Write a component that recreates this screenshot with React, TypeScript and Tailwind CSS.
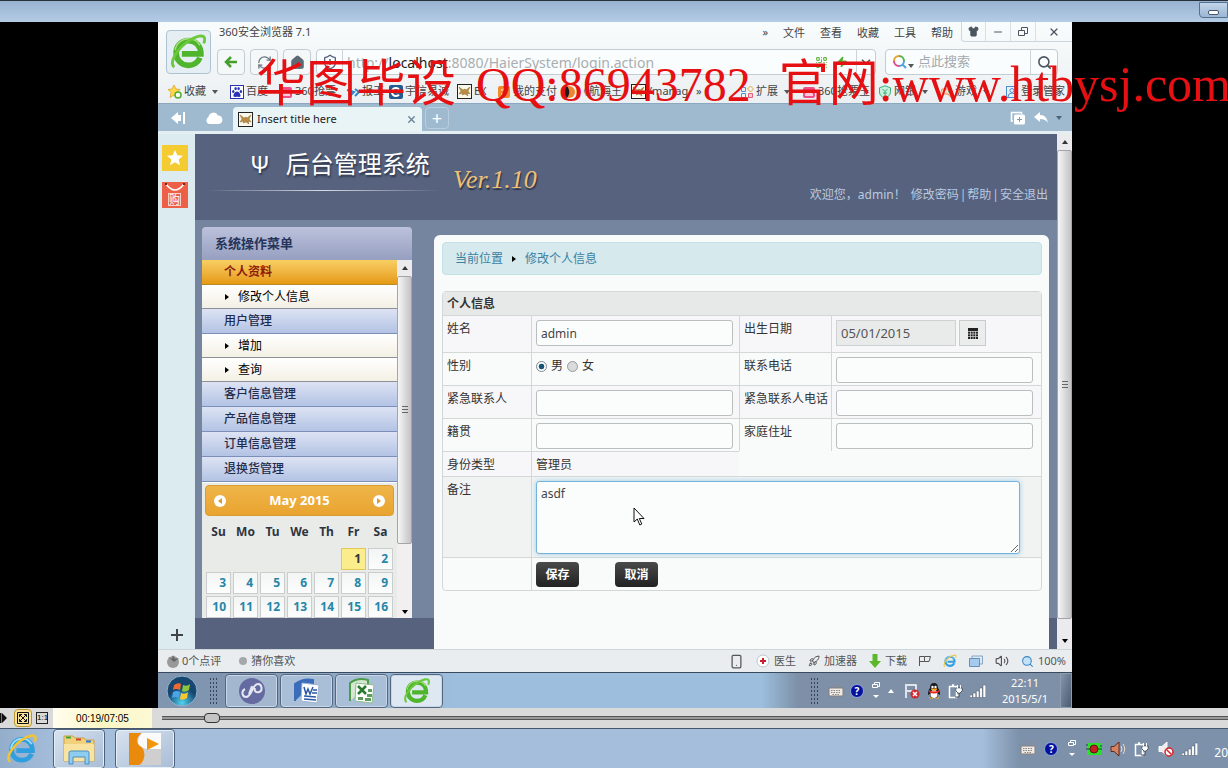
import React from 'react';
import { ChevronDown, Home, Minus, QrCode, RefreshCw, Rocket, Search, Shield, Shirt, Smartphone, Volume2, X, Zap } from 'lucide-react';

interface IconProps {
  className?: string;
}

const BrowserLogo: React.FC<IconProps> = ({ className }) => (
  <svg className={className} viewBox="0 0 40 40" fill="none">
    <path d="M32 26c-2 5-7 8-12 8C12 34 7 28 7 21S12 8 20 8s13 6 13 14H13" stroke="#4fb52c" strokeWidth="6" />
    <path d="M6 18c1-7 7-12 14-12 6 0 10 3 12 7" stroke="#a6e07c" strokeWidth="1.500" />
    <path d="M5 36C-1 31 8 17 19 9 28 3 37 1 37 6c0 2 0 3-1 5" stroke="#6cc83c" strokeWidth="3" />
  </svg>
);

const IeLogo: React.FC<IconProps> = ({ className }) => (
  <svg className={className} viewBox="0 0 40 40" fill="none">
    <path d="M32 26c-2 5-7 8-12 8C12 34 7 28 7 21S12 8 20 8s13 6 13 14H13" stroke="#2f9fe0" strokeWidth="6" />
    <path d="M6 20c1-8 7-13 14-13 6 0 10 3 12 7" stroke="#9fe0fb" strokeWidth="2" />
    <path d="M5 36C-1 31 8 17 19 9 28 3 37 1 37 6c0 2 0 3-1 5" stroke="#f4c430" strokeWidth="3" />
  </svg>
);

const Keyboard: React.FC = () => (
  <svg className="h-4 w-4" viewBox="0 0 16 16">
    <path d="M8 4V2h4" stroke="#8c8c8c" fill="none" />
    <rect x="1" y="5" width="14" height="8" rx="1" fill="#eee9e4" stroke="#877f7b" />
    <path d="M3 7.500h10M3 9.500h10M4.500 11.500h7" stroke="#8c8683" strokeDasharray="1.500 1" />
  </svg>
);

const Help: React.FC = () => (
  <span className="flex h-3.5 w-3.5 items-center justify-center rounded-full border border-[#8ea6dd] bg-[#06109b] text-[10px] font-bold leading-none text-white">?</span>
);

const Restore: React.FC = () => (
  <svg className="h-5 w-3" viewBox="0 0 12 20" fill="none">
    <path d="M4.500 3.500v-2h5v4h-2M2.500 3.500h5v3h-5z" stroke="#fff" />
    <path d="M3 14h6l-3 3z" fill="#fff" />
  </svg>
);

const Plug: React.FC = () => (
  <svg className="h-4 w-4" viewBox="0 0 16 16" fill="none">
    <path d="M1.500 3.500h7v11h-7zM4 2h2" stroke="#fff" strokeWidth="1.500" />
    <path d="M8 5h6v3l-2 2h-2L8 8zM9.500 2v3M12.500 2v3M11 10v4H7" fill="#fff" stroke="#3a4656" />
    <path d="M8.500 5.500h5V8l-1.500 1.500h-2L8.500 8zM9 2h1v3H9zM12 2h1v3h-1z" fill="#fff" />
  </svg>
);

const Signal: React.FC = () => (
  <svg className="h-4 w-4" viewBox="0 0 16 16" fill="#fff" stroke="#4c5b6d" strokeWidth=".5">
    <path d="M0 12h2.500v2.500H0zM3 10h2.800v4.500H3zM6.300 8H9v6.500H6.300zM9.600 5h2.800v9.500H9.600zM13 2h2.800v12.500H13z" />
  </svg>
);

const Speaker: React.FC<{ muted?: boolean }> = ({ muted }) => (
  <svg className="h-4 w-4" viewBox="0 0 16 16" fill="none">
    <path d="M1 5.500h3L9 1v14l-5-4.500H1z" fill={muted ? '#eee' : '#d58362'} stroke={muted ? '#fff' : '#5c2a1c'} />
    {muted ? (
      <>
        <circle cx="11" cy="11" r="4" fill="#fff" stroke="#d3232a" strokeWidth="1.500" />
        <path d="M8.500 8.500l5 5" stroke="#d3232a" strokeWidth="1.500" />
      </>
    ) : (
      <path d="M11 5q2 3 0 6M13 3q3.500 5 0 10" stroke="#f3dccc" />
    )}
  </svg>
);

const Duke: React.FC = () => (
  <svg className="h-[15px] w-[15px] shrink-0" viewBox="0 0 15 15">
    <rect x=".5" y=".5" width="14" height="14" fill="#fbf8ec" stroke="#222" />
    <path d="M2 3l4 3 2-1 1 1 4-3-2 4 2 3-3-1 1 3-3-2-3 1 1-2-4 1 2-3z" fill="#b98d45" stroke="#8d6a2c" strokeWidth=".5" />
  </svg>
);

const TabPlus: React.FC = () => (
  <svg className="h-4 w-4" viewBox="0 0 16 16" fill="none">
    <path d="M3 11H1.500V2.500h10V4" stroke="#fff" strokeWidth="1.500" />
    <rect x="4" y="4.500" width="11" height="10" rx="1.500" fill="#fff" />
    <path d="M9.500 7v5M7 9.500h5" stroke="#7f9db8" />
  </svg>
);

const Caret: React.FC<IconProps> = ({ className }) => (
  <svg className={`h-1 w-1.5 ${className ?? ''}`} viewBox="0 0 6 4" fill="currentColor">
    <path d="M0 0h6L3 4z" />
  </svg>
);

const Grip: React.FC = () => (
  <div className="h-7 w-2 bg-[radial-gradient(#394556_40%,transparent_45%)] bg-[length:3px_4px]" />
);

const Dot: React.FC<{ kind: string }> = ({ kind }) => {
  const common = 'h-[14px] w-[14px] shrink-0';
  switch (kind) {
    case 'star':
      return (
        <svg className={common} viewBox="0 0 14 14">
          <path d="M6 0l2 4 4 .5-3 3 1 5-4-2.500-4 2.500 1-5-3-3L4 4z" fill="#ffd84d" stroke="#d79b19" strokeWidth=".7" />
          <circle cx="10" cy="10" r="3" fill="#fff" stroke="#4fae2c" strokeWidth="1.500" />
        </svg>
      );
    case 'baidu':
      return (
        <svg className={common} viewBox="0 0 14 14">
          <rect x=".5" y=".5" width="13" height="13" fill="#fff" stroke="#2932b5" />
          <g fill="#2932b5">
            <ellipse cx="3.300" cy="6.500" rx="1.200" ry="1.600" />
            <ellipse cx="5.600" cy="3.600" rx="1.200" ry="1.600" />
            <ellipse cx="8.600" cy="3.600" rx="1.200" ry="1.600" />
            <ellipse cx="10.900" cy="6.500" rx="1.200" ry="1.600" />
            <path d="M7 6.500c2 0 4 3 3.500 4.500S8 11.800 7 11.800 4 12.500 3.500 11 5 6.500 7 6.500z" />
          </g>
        </svg>
      );
    case 'pink':
      return (
        <svg className={common} viewBox="0 0 14 14">
          <rect x="1" y="2" width="12" height="11" rx="2" fill="#ee4f86" />
          <path d="M3 5h8v2l-1 1 1 1v2H3V9l1-1-1-1z" fill="#fbc9db" />
        </svg>
      );
    case 'job':
      return (
        <svg className={common} viewBox="0 0 14 14" fill="none" stroke="#2d86c9" strokeWidth="2">
          <path d="M4 1v12M1 5l7 2-4 4M9 4l4 3-4 4" />
        </svg>
      );
    case 'city':
      return (
        <svg className={common} viewBox="0 0 14 14">
          <rect width="14" height="14" rx="2" fill="#245b8e" />
          <path d="M10 4.500a4 4 0 1 0 0 5" fill="none" stroke="#fff" strokeWidth="2" />
          <circle cx="8" cy="7" r="1.500" fill="#e55" />
        </svg>
      );
    case 'pay':
      return (
        <svg className={common} viewBox="0 0 14 14">
          <rect x="1" y="1" width="12" height="12" rx="2" fill="#f28a2c" />
          <path d="M4 5h6M7 3v8M4 9q6 0 6-2" stroke="#fff" fill="none" />
        </svg>
      );
    case 'sail':
      return (
        <svg className={common} viewBox="0 0 14 14">
          <circle cx="7" cy="7" r="6" fill="#f08433" />
          <path d="M5 1a6 6 0 0 0 0 12c3-4 3-8 0-12z" fill="#1a1a1a" />
        </svg>
      );
    case 'apps':
      return (
        <svg className={common} viewBox="0 0 14 14" fill="none">
          <path d="M1.500 2.500h4v4h-4zM1.500 8.500h4v4h-4z" stroke="#4d94cf" />
          <path d="M10.500 1l3 3-3 3-3-3z" stroke="#eda13c" />
          <path d="M8.500 8.500h4v4h-4z" stroke="#e5627c" fill="#f9ccd4" />
        </svg>
      );
    case 'bank':
      return (
        <svg className={common} viewBox="0 0 14 14" fill="#c9f0dc" stroke="#37b27c">
          <path d="M7 .8l5.500 2v4c0 3-2 5-5.500 6.500C3.500 11.800 1.500 10 1.500 7V2.800z" />
          <path d="M4.500 4L7 6.500 9.500 4M7 6.500V11M5 8h4" />
        </svg>
      );
    case 'game':
      return (
        <svg className={common} viewBox="0 0 14 14">
          <path d="M3 4h8q3 8 1 8-1 0-3-3H5q-2 3-3 3-2 0 1-8z" fill="#fbe1c7" stroke="#ea8a54" />
          <circle cx="10" cy="6.500" r="1" fill="#4c9" />
        </svg>
      );
    case 'login':
      return (
        <svg className={common} viewBox="0 0 14 14" fill="none" stroke="#4d8ed0">
          <rect x="1.500" y="1.500" width="11" height="11" fill="#e4f1fb" />
          <circle cx="7" cy="5.500" r="2" />
          <path d="M3 12q0-4 4-4t4 4" />
        </svg>
      );
    default:
      return <Duke />;
  }
};

const bookmarks = [
  { label: '收藏', icon: 'star', width: 'w-[62px]', menu: true },
  { label: '百度', icon: 'baidu', width: 'w-[49px]' },
  { label: '360抢票', icon: 'pink', width: 'w-[67px]' },
  { label: '报工', icon: 'job', width: 'w-[43px]' },
  { label: '宇信易诚', icon: 'city', width: 'w-[68px]' },
  { label: 'EX', icon: 'duke', width: 'w-[40px]' },
  { label: '我的支付', icon: 'pay', width: 'w-[65px]' },
  { label: '《航海王', icon: 'sail', width: 'w-[69px]' },
  { label: '/manag', icon: 'duke', width: 'w-[65px]' },
  { label: '»', icon: '', width: 'w-[44px]' },
  { label: '扩展', icon: 'apps', width: 'w-[62px]', menu: true },
  { label: '360抢票王', icon: 'pink', width: 'w-[76px]' },
  { label: '网银', icon: 'bank', width: 'w-[61px]', menu: true },
  { label: '游戏', icon: 'game', width: 'w-[66px]', menu: true },
  { label: '登录管家', icon: 'login', width: 'w-[66px]' },
];

const menus = ['文件', '查看', '收藏', '工具', '帮助'];

const navItems = [
  { label: '个人资料', type: 'active' },
  { label: '修改个人信息', type: 'sub' },
  { label: '用户管理', type: 'group' },
  { label: '增加', type: 'sub' },
  { label: '查询', type: 'sub' },
  { label: '客户信息管理', type: 'group' },
  { label: '产品信息管理', type: 'group' },
  { label: '订单信息管理', type: 'group' },
  { label: '退换货管理', type: 'group' },
];

const navStyles: Record<string, string> = {
  active: 'h-[25px] pl-[22px] font-bold text-[#8c1f0a] border-[#b98a2c] bg-linear-to-b from-[#f8cf62] to-[#e59a0c]',
  sub: 'h-6 pl-[22px] text-black border-[#8f9198] bg-linear-to-b from-white to-[#f3f0e4]',
  group: 'h-[25px] pl-[22px] font-medium text-[#1f2c4d] border-[#7d8fb8] bg-linear-to-b from-[#dde3f3] to-[#b3c3e4]',
};

const weeks = [
  [0, 0, 0, 0, 0, 1, 2],
  [3, 4, 5, 6, 7, 8, 9],
  [10, 11, 12, 13, 14, 15, 16],
];

const navButton = 'flex h-[26px] w-7 shrink-0 items-center justify-center rounded-sm border border-[#c3ccd1] bg-[#f4f8f9]';
const field = 'block h-[26px] w-[197px] rounded-[3px] border border-[#b9bebf] bg-[#fbfdfd] px-1 text-[12px] text-[#444]';
const label = 'border-t border-[#d3d8d6] pl-1 pt-1 align-top leading-[18px]';
const cell = 'border-t border-l border-[#d3d8d6] pl-1 pt-1 align-top leading-[18px]';

const BrowserHeader: React.FC = () => (
  <header className="shrink-0 bg-linear-to-b from-[#f9fcfc] to-[#e6ebee]">
    <div className="flex h-[54px] pl-2">
      <button aria-label="360" className="mt-2 h-[44px] w-[45px] shrink-0 rounded-sm border border-[#aec3d2] bg-[#e4eef3] p-0.5">
        <BrowserLogo className="h-full w-full" />
      </button>
      <div className="flex min-w-0 flex-1 flex-col pl-1.5">
        <div className="flex h-[27px] items-start justify-between text-[11px] text-[#444]">
          <span className="pt-0.5 pl-0.5">360安全浏览器 7.1</span>
          <div className="flex">
            <nav className="flex gap-[15px] pt-0.5 pr-2">
              <span>»</span>
              {menus.map((m) => (
                <button key={m}>{m}</button>
              ))}
            </nav>
            <div className="flex h-5 rounded-bl border-b border-l border-[#ccd7dd] text-[#4b5560]">
              <button aria-label="皮肤" className="flex w-6 items-center justify-center border-r border-[#d8e0e4]"><Shirt size={11} fill="currentColor" /></button>
              <button aria-label="最小化" className="flex w-[25px] items-center justify-center border-r border-[#d8e0e4]"><Minus size={12} /></button>
              <button aria-label="还原" className="flex w-[25px] items-center justify-center border-r border-[#d8e0e4]">
                <svg className="h-2.5 w-2.5" viewBox="0 0 10 10" fill="none" stroke="currentColor"><path d="M3.500 3V.5h6v6H7M.5 3.500h6v5h-6z" /></svg>
              </button>
              <button aria-label="关闭" className="flex w-9 items-center justify-center"><X size={12} strokeWidth={2.5} /></button>
            </div>
          </div>
        </div>
        <div className="flex items-center gap-[5px] pr-3.5">
          <button aria-label="后退" className={navButton}>
            <svg className="h-3.5 w-3.5" viewBox="0 0 14 14" fill="none" stroke="#45a02b" strokeWidth="2.500"><path d="M13 7H3M7 2L2 7l5 5" /></svg>
          </button>
          <button aria-label="刷新" className={navButton}><RefreshCw size={15} color="#6a7680" /></button>
          <button aria-label="主页" className={navButton}>
            <Home size={15} color="#5c6a75" fill="#5c6a75" />
          </button>
          <div className="flex h-[26px] min-w-0 flex-1 items-center rounded-sm border border-[#c3ccd1] bg-[#fafdfd]">
            <span className="flex h-full w-[26px] items-center justify-center border-r border-[#ccd4d8]">
              <span className="relative flex">
                <Shield size={16} color="#50627e" />
                <svg className="absolute inset-0 h-4 w-4" viewBox="0 0 16 16" stroke="#50627e" strokeWidth="1.500"><path d="M8 5v6M5 8h6" /></svg>
              </span>
            </span>
            <a href="#address" className="min-w-0 flex-1 truncate pl-1 text-[14px] text-[#a9aeb1]">http://<span className="text-[#222]">localhost</span>:8080/HaierSystem/login.action</a>
            <QrCode size={13} color="#63b544" />
            <Zap size={12} color="#4bae2a" fill="#4bae2a" className="mx-2" />
            <button aria-label="展开" className="flex h-full w-[19px] items-center justify-center border-l border-[#ccd4d8]"><ChevronDown size={14} color="#555" strokeWidth={3} /></button>
          </div>
          <div className="ml-1 flex h-[26px] w-[173px] items-center rounded-sm border border-[#c3ccd1] bg-[#fafdfd] pl-1.5">
            <svg className="h-4 w-4 shrink-0" viewBox="0 0 16 16" fill="none" strokeWidth="2">
              <path d="M7 2a5 5 0 0 0-5 5" stroke="#e8a02e" />
              <path d="M2 7a5 5 0 0 0 5 5" stroke="#d94c93" />
              <path d="M7 12a5 5 0 0 0 5-5M10 10l4 4" stroke="#4ba5dc" />
              <path d="M12 7a5 5 0 0 0-5-5" stroke="#55b54a" />
            </svg>
            <Caret className="mt-2 shrink-0 text-[#555]" />
            <input aria-label="搜索" placeholder="点此搜索" className="ml-1 w-0 flex-1 bg-transparent text-[13px] outline-none placeholder:text-[#a3a9ac]" />
            <button aria-label="搜索按钮" className="flex h-full w-[27px] items-center justify-center border-l border-[#ccd4d8]"><Search size={15} color="#4b5560" strokeWidth={2.5} /></button>
          </div>
        </div>
      </div>
    </div>
    <div className="flex h-[27px] items-center overflow-hidden pl-2.5 pt-1 text-[11px] text-[#444]">
      {bookmarks.map((b, i) => (
        <a key={i} href="#bookmark" className={`flex shrink-0 items-center gap-0.5 whitespace-nowrap ${b.width}`}>
          {b.icon && <Dot kind={b.icon} />}
          <span>{b.label}</span>
          {b.menu && <Caret className="ml-1 text-[#555]" />}
        </a>
      ))}
    </div>
    <div className="flex h-[31px] items-stretch border-t border-b-[3px] border-t-[#8aa8bf] border-b-[#e5eff3] bg-[#9fbacf] text-white">
      <button aria-label="收起" className="flex w-9 items-center justify-center">
        <svg className="ml-1 h-3.5 w-4" viewBox="0 0 16 14" fill="#fff"><path d="M8 1v3h3v6H8v3L1 7zM13 1h2v12h-2z" /></svg>
      </button>
      <button aria-label="云" className="flex w-[39px] items-center justify-center">
        <svg className="h-3.5 w-[18px]" viewBox="0 0 18 14" fill="#fff"><path d="M4 13a3.800 3.800 0 0 1-.5-7A5 5 0 0 1 13 4.500 4.300 4.300 0 0 1 14 13z" /></svg>
      </button>
      <div className="mt-[3px] flex w-[189px] items-center rounded-t bg-[#e9f4f7] px-[5px] text-[11px] text-[#222]">
        <Duke />
        <span className="ml-1 flex-1">Insert title here</span>
        <button aria-label="关闭标签"><X size={11} color="#6b8398" strokeWidth={3} /></button>
      </div>
      <button aria-label="新标签" className="mt-[3px] mb-0.5 ml-[3px] flex w-6 items-center justify-center rounded-sm border border-[#b9cfdf] text-[18px] leading-none">+</button>
      <div className="ml-auto flex items-center gap-2 pr-2.5">
        <TabPlus />
        <svg className="h-3.5 w-3.5" viewBox="0 0 14 14" fill="#fff"><path d="M6 1v3c5 0 7 3 8 8-2-3-4-4-8-4v3L0 6z" /></svg>
        <Caret className="text-[#4d6478]" />
      </div>
    </div>
  </header>
);

const SideStrip: React.FC = () => (
  <div className="flex w-[37px] shrink-0 flex-col items-center bg-[#dcebef] pt-[11px] pb-2">
    <button aria-label="收藏夹" className="mr-1 flex h-[26px] w-[26px] items-center justify-center bg-[#f5cb32]">
      <svg className="h-4 w-4" viewBox="0 0 16 16" fill="#fff"><path d="M8 0l2.300 5.300 5.700.5-4.300 3.800L13 15.200 8 12.200l-5 3 1.300-5.600L0 5.800l5.700-.5z" /></svg>
    </button>
    <button aria-label="购物" className="relative mt-[11px] mr-1 flex h-[26px] w-[26px] items-end justify-center bg-[#ec6048] text-[11px] leading-none text-white">
      <svg className="absolute inset-x-0 top-0 h-2.5 w-full" viewBox="0 0 26 10" fill="none"><path d="M4 2q9 12 18 0" stroke="#fff" strokeWidth="1.500" /><path d="M3 2h2M21 2h2" stroke="#722" strokeWidth="2" /></svg>
      <span className="mb-0.5 border border-white/70">购</span>
    </button>
    <button aria-label="添加" className="mt-auto">
      <svg className="h-3 w-3" viewBox="0 0 12 12" stroke="#3f4448" strokeWidth="2"><path d="M6 0v12M0 6h12" /></svg>
    </button>
  </div>
);

const Scrollbar: React.FC<{ className: string }> = ({ className }) => (
  <div className={`flex w-[15px] shrink-0 flex-col bg-[#ebebed] text-[#333] ${className}`}>
    <div className="flex h-4 shrink-0 items-center justify-center"><Caret className="rotate-180" /></div>
    <div className="flex min-h-0 flex-1 items-center justify-center rounded-xs border border-[#a5a5a8] bg-linear-to-r from-[#f6f6f6] to-[#c3c3c6]">
      <div className="h-2 w-1.5 bg-[repeating-linear-gradient(#666_0_1px,transparent_1px_3px)]" />
    </div>
  </div>
);

const Calendar: React.FC = () => (
  <div className="min-h-0 flex-1 overflow-hidden border-t border-white bg-[#e9ebe9] px-[3px] pt-0.5 font-bold text-[#2f3440]">
    <div className="flex h-[31px] items-center justify-between rounded border border-[#d99b33] bg-linear-to-b from-[#efb549] to-[#e9a42e] px-2 text-[13px] text-white">
      <button aria-label="上个月" className="flex h-3 w-3 items-center justify-center rounded-full bg-white text-[#d99b33]"><Caret className="rotate-90" /></button>
      <span>May 2015</span>
      <button aria-label="下个月" className="flex h-3 w-3 items-center justify-center rounded-full bg-white text-[#d99b33]"><Caret className="-rotate-90" /></button>
    </div>
    <table className="w-full table-fixed border-separate border-spacing-0 text-[12px]">
      <thead>
        <tr className="h-[31px]">
          {['Su', 'Mo', 'Tu', 'We', 'Th', 'Fr', 'Sa'].map((d) => (
            <th key={d} className="p-0">{d}</th>
          ))}
        </tr>
      </thead>
      <tbody>
        {weeks.map((week, i) => (
          <tr key={i}>
            {week.map((day, j) => (
              <td key={j} className="p-px">
                {day > 0 && (
                  <a
                    href="#day"
                    className={`block h-[22px] border pr-1 text-right leading-5 ${
                      day === 1 ? 'border-[#e2c75a] bg-[#fbec8c] text-[#333]' : 'border-[#c9cdce] bg-linear-to-b from-[#f3f4f4] to-[#fdfdfd] text-[#2586a8]'
                    }`}
                  >
                    {day}
                  </a>
                )}
              </td>
            ))}
          </tr>
        ))}
      </tbody>
    </table>
  </div>
);

const Sidebar: React.FC = () => (
  <aside className="mt-[7px] mb-[31px] flex w-[210px] shrink-0 flex-col overflow-hidden rounded-t">
    <h2 className="flex h-[33px] shrink-0 items-center bg-linear-to-b from-[#bcc2dc] to-[#979fc0] pl-[13px] text-[13px] font-bold text-[#26345a]">系统操作菜单</h2>
    <div className="flex min-h-0 flex-1">
      <div className="flex min-w-0 flex-1 flex-col">
        <ul className="shrink-0 text-[12px]">
          {navItems.map((item) => (
            <li key={item.label}>
              <a href="#nav" className={`flex items-center border-b ${navStyles[item.type]}`}>
                {item.type === 'sub' && <Caret className="mr-2 -rotate-90" />}
                {item.label}
              </a>
            </li>
          ))}
        </ul>
        <Calendar />
      </div>
      <div className="flex flex-col bg-[#f1eff0]">
        <Scrollbar className="min-h-0 flex-1" />
        <div className="flex h-[74px] items-end justify-center pb-1"><Caret /></div>
      </div>
    </div>
  </aside>
);

const ProfileForm: React.FC = () => (
  <main className="mt-[15px] mr-2 ml-[22px] min-w-0 flex-1 overflow-hidden rounded-t-md bg-[#f8fbfa] pt-[7px] pr-[7px] pl-2 text-[12px] text-[#333]">
    <nav className="flex h-[33px] items-center gap-2 rounded border border-[#c3e0e7] bg-[#d6e9ed] px-3 text-[#3a82a3]">
      <a href="#home">当前位置</a>
      <Caret className="-rotate-90 text-black" />
      <a href="#profile">修改个人信息</a>
    </nav>
    <table className="mt-4 w-full table-fixed border-separate border-spacing-0 rounded border border-[#d3d8d6]">
      <colgroup>
        <col className="w-[88px]" />
        <col className="w-[208px]" />
        <col className="w-[92px]" />
        <col />
      </colgroup>
      <thead>
        <tr className="h-[23px] bg-[#e7e9e8]">
          <th colSpan={4} className="pl-1 text-left font-bold">个人信息</th>
        </tr>
      </thead>
      <tbody>
        <tr className="h-[37px] bg-[#f7f6f8]">
          <td className={label}><label htmlFor="name">姓名</label></td>
          <td className={cell}><input id="name" defaultValue="admin" className={field} /></td>
          <td className={cell}><label htmlFor="birth">出生日期</label></td>
          <td className={cell}>
            <div className="flex gap-[3px]">
              <input id="birth" readOnly value="05/01/2015" className="h-[26px] w-[120px] border border-[#ced2d2] bg-[#e9ebea] px-1 text-[13px] text-[#555]" />
              <button aria-label="选择日期" className="flex h-[26px] w-[27px] items-center justify-center border border-[#c8cccc] bg-[#ebedec]">
                <svg className="h-3 w-3" viewBox="0 0 12 12"><path d="M1 1h10v11H1z" fill="#222" /><path d="M1 4.500h10M1 7h10M1 9.500h10M3.500 4v8M6 4v8M8.500 4v8" stroke="#ddd" strokeWidth=".7" /></svg>
              </button>
            </div>
          </td>
        </tr>
        <tr className="h-[33px]">
          <td className={label}>性别</td>
          <td className={cell}>
            <div className="flex items-center gap-1">
              <input id="male" type="radio" name="sex" defaultChecked className="h-[11px] w-[11px] appearance-none rounded-full border border-[#7c8a94] bg-white bg-[radial-gradient(#17547c_40%,transparent_50%)]" />
              <label htmlFor="male">男</label>
              <input id="female" type="radio" name="sex" className="h-[11px] w-[11px] appearance-none rounded-full border border-[#9a9a9a] bg-[#d9dada]" />
              <label htmlFor="female">女</label>
            </div>
          </td>
          <td className={cell}><label htmlFor="phone">联系电话</label></td>
          <td className={cell}><input id="phone" className={field} /></td>
        </tr>
        <tr className="h-[33px] bg-[#f7f6f8]">
          <td className={label}><label htmlFor="contact">紧急联系人</label></td>
          <td className={cell}><input id="contact" className={field} /></td>
          <td className={cell}><label htmlFor="contactPhone">紧急联系人电话</label></td>
          <td className={cell}><input id="contactPhone" className={field} /></td>
        </tr>
        <tr className="h-[33px]">
          <td className={label}><label htmlFor="origin">籍贯</label></td>
          <td className={cell}><input id="origin" className={field} /></td>
          <td className={cell}><label htmlFor="address">家庭住址</label></td>
          <td className={cell}><input id="address" className={field} /></td>
        </tr>
        <tr className="h-[25px]">
          <td className={`${label} bg-[#f7f6f8]`}>身份类型</td>
          <td className={`${cell} bg-[#f7f6f8]`}>管理员</td>
          <td colSpan={2} />
        </tr>
        <tr className="h-[81px] bg-[#f0f3f2]">
          <td className={label}><label htmlFor="remark">备注</label></td>
          <td colSpan={3} className={`${cell} pr-[21px]`}>
            <div className="relative">
              <textarea id="remark" defaultValue="asdf" className="block h-[73px] w-full rounded-[3px] border border-[#75b3da] bg-[#fbfdfd] px-1 py-0.5 leading-5 text-[#444] shadow-[0_0_5px_#9dcbeb]" />
              <svg className="absolute top-[26px] left-[97px] h-[19px] w-3" viewBox="0 0 12 19"><path d="M1 1v14l3.300-3 2.500 6 2-1-2.500-5.500H11z" fill="#fff" stroke="#111" /></svg>
            </div>
          </td>
        </tr>
        <tr className="h-[33px]">
          <td className={label} />
          <td colSpan={3} className={cell}>
            <div className="flex gap-9 font-bold text-white">
              <button className="h-[25px] w-[43px] rounded bg-linear-to-b from-[#4a4a4a] to-[#222]">保存</button>
              <button className="h-[25px] w-[43px] rounded bg-linear-to-b from-[#4a4a4a] to-[#222]">取消</button>
            </div>
          </td>
        </tr>
      </tbody>
    </table>
  </main>
);

const AdminPage: React.FC = () => (
  <div className="flex min-w-0 flex-1 flex-col">
    <div className="flex h-[86px] shrink-0 justify-between bg-[#56627e] pl-2.5">
      <div className="flex">
        <div className="w-[236px]">
          <h1 className="flex h-14 items-center gap-4 pl-[45px] pt-1 text-[24px] text-white [text-shadow:1px_2px_2px_#2c3448]">
            <span>Ψ</span>
            <span className="whitespace-nowrap">后台管理系统</span>
          </h1>
          <div className="h-px bg-linear-to-r from-transparent via-[#d7dce4] to-transparent" />
        </div>
        <span className="ml-3 pt-[26px] font-['Liberation_Serif',serif] text-[26px] italic text-[#eec078] [text-shadow:1px_2px_1px_#2c3448]">Ver.1.10</span>
      </div>
      <div className="flex items-end gap-px pr-[9px] pb-4 text-[12px] text-[#bcc9de]">
        <span className="mr-1">欢迎您，admin！</span>
        <a href="#password">修改密码</a>|<a href="#help">帮助</a>|<a href="#logout">安全退出</a>
      </div>
    </div>
    <div className="flex min-h-0 flex-1 bg-[linear-gradient(to_top,#56627e_31px,#75859f_31px)] pl-[7px]">
      <Sidebar />
      <ProfileForm />
    </div>
  </div>
);

const StatusBar: React.FC = () => (
  <footer className="flex h-[23px] shrink-0 items-center justify-between border-t border-[#cfd6da] bg-[#e9edef] pr-1.5 pl-2 text-[11px] text-[#555]">
    <div className="flex items-center">
      <svg className="mr-0.5 h-3.5 w-3.5" viewBox="0 0 14 14"><circle cx="7" cy="8" r="6" fill="#999" /><path d="M2 3l4 2 1-4 2 4 4-1-5 4z" fill="#666" /></svg>
      <span>0个点评</span>
      <span className="mr-1 ml-[18px] h-2 w-2 rounded-full bg-[#a5a8aa]" />
      <span>猜你喜欢</span>
    </div>
    <div className="flex items-center gap-3">
      <Smartphone size={15} />
      <span className="flex items-center gap-1">
        <svg className="h-3.5 w-3.5" viewBox="0 0 14 14"><circle cx="7" cy="7" r="6" fill="#fff" stroke="#b9c9d0" /><path d="M7 4v6M4 7h6" stroke="#c8202c" strokeWidth="2" /></svg>
        医生
      </span>
      <span className="flex items-center gap-1"><Rocket size={12} />加速器</span>
      <span className="flex items-center gap-1">
        <svg className="h-3.5 w-3" viewBox="0 0 12 14"><path d="M3.500 0h5v7H12l-6 7-6-7h3.500z" fill="#5cb82a" /></svg>
        下载
      </span>
      <svg className="h-3 w-3" viewBox="0 0 12 12" fill="none" stroke="#555"><path d="M.5 11V1.500h5v5h-5M5.500 1.500h6l-1.500 5H5.500" /></svg>
      <IeLogo className="h-3.5 w-3.5" />
      <svg className="h-3 w-3.5" viewBox="0 0 14 12"><path d="M3 1h10.500v8H3z" fill="#dce9f5" stroke="#8aa6c4" /><path d="M.5 3.500h10v8H.5z" fill="#a6c9ee" stroke="#6490c0" /></svg>
      <Volume2 size={14} />
      <span className="flex items-center gap-1"><Search size={13} color="#3b86c6" fill="#c4e2f7" />100%</span>
    </div>
  </footer>
);

const InnerTaskbar: React.FC = () => {
  const task = 'flex h-[34px] w-[53px] items-center justify-center rounded-sm border border-[#54677f] shadow-[inset_0_0_0_1px_#c7d7e8]';
  return (
    <div className="flex h-9 shrink-0 items-center justify-between border-t border-[#3a4a5e] bg-[linear-gradient(to_right,#8095af_0,#8095af_66px,#9dbfdd_300px,#9dbfdd_66%,#7d90a8_70%)]">
      <div className="flex items-center gap-0.5">
        <button aria-label="开始" className="ml-1.5 flex w-9 justify-center">
          <svg className="h-8 w-8" viewBox="0 0 32 32">
            <defs>
              <radialGradient id="orb" cy=".9"><stop offset="0" stopColor="#4fd3f2" /><stop offset="1" stopColor="#17466f" /></radialGradient>
            </defs>
            <circle cx="16" cy="16" r="15" fill="url(#orb)" stroke="#8fb3ce" />
            <path d="M8 10q4-3 7-1l-1 6q-4-2-7 0z" fill="#ee6a2f" />
            <path d="M17 10q4 2 7-1l-1 6q-4 3-7 1z" fill="#8cc63f" />
            <path d="M7 17q4-2 7 0l-1 6q-3-2-7 0z" fill="#4aa6e8" />
            <path d="M15 18q4 2 7-1l-1 6q-4 3-7 1z" fill="#f9c72f" />
          </svg>
        </button>
        <div className="flex w-[21px] justify-center"><Grip /></div>
        <button aria-label="MyEclipse" className={`${task} bg-[#a3b8cf]`}>
          <svg className="h-7 w-7" viewBox="0 0 28 28" fill="none">
            <circle cx="14" cy="14" r="13" fill="#656ba0" />
            <path d="M7 12c-4 2-3 8 1 8 6 0 6-13 12-13 4 0 5 7 1 8-3 1-5-1-4-4M14 9l-3 8" stroke="#e4e6f2" strokeWidth="2" />
          </svg>
        </button>
        <button aria-label="Word" className={`${task} bg-[#a9bfd8]`}>
          <svg className="h-7 w-7" viewBox="0 0 28 28" fill="none"><path d="M2 24V7q8-6 18-4v4" fill="#3b6dba" stroke="#3b6dba" strokeWidth="2" /><path d="M9 6l17 2-2 18-16-2z" fill="#fff" stroke="#9cb4d4" /><path d="M11 10l2 7 2-5 2 5 3-7" stroke="#2a57a5" strokeWidth="1.500" /><path d="M20 13h4M19 16h5M11 19l12 1M11 22l12 1" stroke="#2a57a5" strokeWidth="1.500" /></svg>
        </button>
        <button aria-label="Excel" className={`${task} bg-[#a9bfd8]`}>
          <svg className="h-7 w-7" viewBox="0 0 28 28" fill="none"><path d="M2 24V6q8-6 18-3v5" fill="#d5e8d2" stroke="#4d9c4a" strokeWidth="2" /><path d="M8 6l18 2-2 18-17-2z" fill="#fff" stroke="#8cbd8a" /><path d="M10 9l8 8M18 9l-8 8" stroke="#287a2c" strokeWidth="2.500" /><path d="M20 12h4v3h-4zM19 17h5v3h-5zM10 20h5v3h-5zM17 21h6v3h-6z" fill="#5b9c5c" /></svg>
        </button>
        <button aria-label="360浏览器" className={`${task} bg-[#dde8f3]`}><BrowserLogo className="h-7 w-7" /></button>
      </div>
      <div className="flex h-full items-center gap-1.5 text-white">
        <Grip />
        <span className="ml-1"><Keyboard /></span>
        <Help />
        <Restore />
        <Caret className="rotate-180" />
        <svg className="ml-1 h-4 w-4" viewBox="0 0 16 16" fill="none"><path d="M2 1v14M3 2h9v6H3" stroke="#fff" strokeWidth="1.500" /><circle cx="11" cy="11" r="4.500" fill="#d0292f" /><path d="M9 9l4 4M13 9l-4 4" stroke="#fff" strokeWidth="1.500" /></svg>
        <svg className="h-4 w-4" viewBox="0 0 16 16"><path d="M2 12q0-5 2-7Q4 0 8 0t4 5q2 2 2 7l-2-1-1 4H5l-1-4z" fill="#1b1b1b" /><ellipse cx="8" cy="11" rx="3.500" ry="4" fill="#fff" /><path d="M3 7q5 3 10 0v2q-5 3-10 0z" fill="#e5261f" /><circle cx="6.500" cy="4" r="1.200" fill="#fff" /><circle cx="9.500" cy="4" r="1.200" fill="#fff" /><path d="M5 6h6L8 7.500zM3 15h4M9 15h4" fill="#f5a623" stroke="#f5a623" /></svg>
        <Plug />
        <Signal />
        <div className="w-[62px] pl-1 text-center text-[11px] leading-4">
          22:11
          <br />
          2015/5/1
        </div>
        <button aria-label="显示桌面" className="h-full w-3 border border-[#8d9cad] bg-linear-to-br from-[#8496ab] to-[#4c5d72]" />
      </div>
    </div>
  );
};

const PlayerControls: React.FC = () => (
  <div className="flex h-5 shrink-0 items-center bg-[#dadada]">
    <button aria-label="播放" className="w-3.5">
      <svg className="h-3 w-2" viewBox="0 0 8 12"><path d="M0 1h1.500v10H0zM2 1l5 5-5 5z" fill="#111" /></svg>
    </button>
    <button aria-label="全屏" className="flex h-[18px] w-[18px] items-center justify-center rounded-sm border border-[#b8962f] bg-[#fbe29a]">
      <svg className="h-3 w-3" viewBox="0 0 12 12" fill="none" stroke="#111"><path d="M.5.5h11v11H.5z" /><path d="M2.500 5V2.500H5M7 2.500h2.500V5M9.500 7v2.500H7M5 9.500H2.500V7M3 3l6 6M9 3L3 9" /></svg>
    </button>
    <button aria-label="原始大小" className="ml-1 h-3 w-3 border border-[#222] font-['Liberation_Sans',sans-serif] text-[8px] leading-[10px]">1:1</button>
    <div className="mr-2.5 ml-[5px] flex h-full w-[99px] items-center justify-center bg-linear-to-r from-[#fffef0] via-[#fcf6c4] to-[#fdf9d6] font-['Liberation_Sans',sans-serif] text-[10px] text-black">00:19/07:05</div>
    <input
      aria-label="播放进度"
      type="range"
      min={0}
      max={425}
      defaultValue={17}
      className="h-1 min-w-0 flex-1 appearance-none border-y border-[#555] bg-[#999] [&::-webkit-slider-thumb]:h-2.5 [&::-webkit-slider-thumb]:w-4 [&::-webkit-slider-thumb]:appearance-none [&::-webkit-slider-thumb]:rounded-sm [&::-webkit-slider-thumb]:border [&::-webkit-slider-thumb]:border-[#333] [&::-webkit-slider-thumb]:bg-[#c4c4c4]"
    />
  </div>
);

const OuterTaskbar: React.FC = () => {
  const task = 'flex h-10 items-center justify-center rounded-sm border border-[#4f627c] bg-linear-to-br from-[#d7e2ef] to-[#a9bdd6] shadow-[inset_0_0_0_1px_#e6eef6]';
  return (
    <div className="flex h-10 shrink-0 items-center border-t border-[#46566b] bg-[linear-gradient(to_right,#93aecb_0,#a5bedb_60px,#a5bedb_80%,#7d91aa_83%)]">
      <button aria-label="Internet Explorer" className="flex w-[53px] pl-1.5"><IeLogo className="h-8 w-8" /></button>
      <button aria-label="文件夹" className={`${task} w-[52px]`}>
        <svg className="h-8 w-9" viewBox="0 0 36 32"><path d="M3 3h9l2 2h9l2 2h8v21H3z" fill="#f1d27c" stroke="#caa145" /><path d="M5 4.500h5" stroke="#4d9f3a" strokeWidth="2" /><path d="M15 6.500h5" stroke="#c8472b" strokeWidth="2" /><path d="M25 8.500h5" stroke="#3b78c4" strokeWidth="2" /><path d="M3 11h30v17H3z" fill="#f8e3a0" /><path d="M8 31V20q0-2 2-2h16q2 0 2 2v11h-4v-7H12v7z" fill="#8fcdf0" stroke="#4a8fc0" /></svg>
      </button>
      <button aria-label="播放器" className={`${task} ml-2.5 w-[60px]`}>
        <svg className="h-8 w-8" viewBox="0 0 32 32"><path d="M0 0h32v32H0z" fill="#cfcfcf" /><path d="M0 0h13Q6 5 9 11q8 5 6 14-1 5-5 7H0z" fill="#e98a0c" /><path d="M13 0h19v16H18q-8-2-9-6 0-6 4-10z" fill="#fafafa" /><path d="M18 5l12 6-12 6z" fill="#f0960f" /></svg>
      </button>
      <div className="ml-auto flex items-center gap-2 text-white">
        <Keyboard />
        <Help />
        <Restore />
        <svg className="h-4 w-4" viewBox="0 0 16 16"><path d="M1 2h14v12H1z" fill="#29e02c" /><circle cx="8" cy="8" r="4" fill="#c51f1f" stroke="#611" /><path d="M0 8h4M12 8h4M1 3v2M15 4v2" stroke="#143" fill="none" /></svg>
        <Speaker />
        <Plug />
        <Speaker muted />
        <Signal />
        <span className="ml-2 self-end text-[12px] leading-3">20</span>
      </div>
    </div>
  );
};

export default function App() {
  return (
    <div className="relative flex h-screen flex-col overflow-hidden bg-black font-['Noto_Sans','Noto_Sans_CJK_SC',sans-serif]">
      <div className="flex h-[22px] shrink-0 justify-end border-t border-[#26303d] bg-linear-to-b from-[#98b2d0] to-[#b4cce6]">
        <button aria-label="最小化窗口" className="mt-px h-4 w-[29px] rounded-bl border border-[#56708f] bg-linear-to-b from-[#c3d5ea] to-[#9bb5d3]">
          <span className="mx-auto mt-1 block h-[5px] w-[11px] rounded-xs border border-[#48566a] bg-white" />
        </button>
      </div>
      <div className="flex min-h-0 flex-1 flex-col pr-[156px] pl-[158px]">
        <BrowserHeader />
        <div className="flex min-h-0 flex-1">
          <SideStrip />
          <AdminPage />
          <div className="flex flex-col bg-[#ebebed]">
            <Scrollbar className="min-h-0 flex-1" />
            <div className="flex h-[30px] items-end justify-center pb-1.5"><Caret /></div>
          </div>
        </div>
        <StatusBar />
        <InnerTaskbar />
      </div>
      <PlayerControls />
      <OuterTaskbar />
      <div className="pointer-events-none absolute top-[54px] left-[256px] flex items-baseline whitespace-nowrap font-['Liberation_Serif','Noto_Sans_CJK_SC',serif] text-[50px] leading-[60px] text-[#e60f12]">
        <span>华图毕设</span>
        <span className="ml-5 text-[48px]">QQ:86943782</span>
        <span className="ml-7">官网:www.htbysj.com</span>
      </div>
    </div>
  );
}
